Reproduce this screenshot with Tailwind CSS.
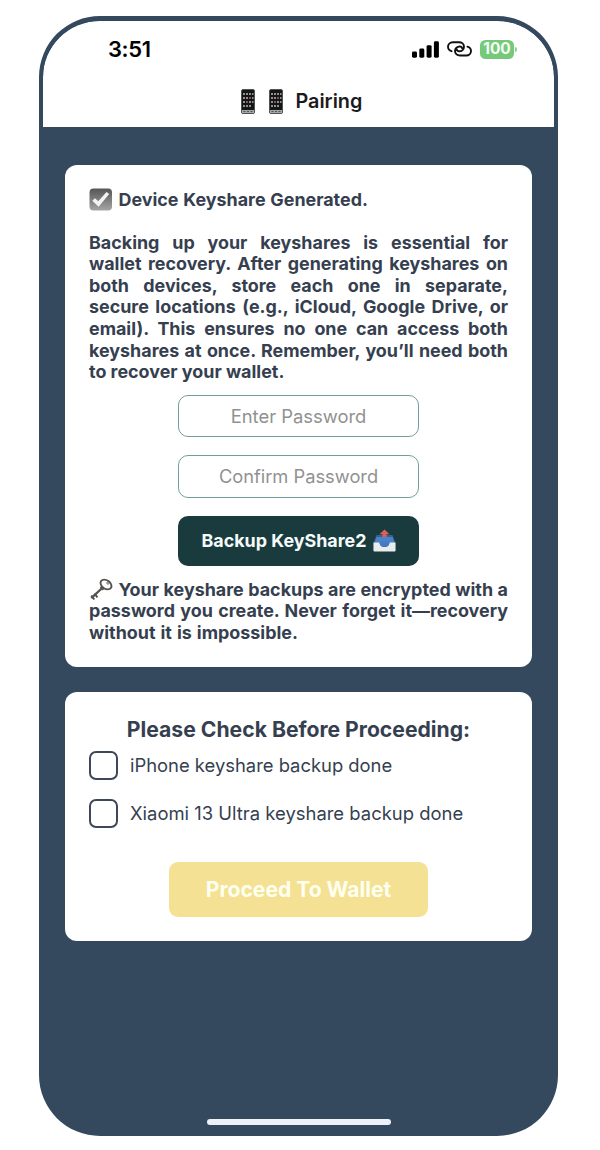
<!DOCTYPE html>
<html lang="en">
<head>
<meta charset="utf-8">
<title>Pairing</title>
<script src="https://cdn.jsdelivr.net/npm/@tailwindcss/browser@4"></script>
</head>
<body class="h-[1150px] overflow-hidden bg-white pt-4 pl-[39px] font-['Inter',sans-serif]">
<svg class="hidden">
  <symbol id="phone" viewBox="0 0 14 25">
    <rect x="0.5" y="0.5" width="13" height="24" rx="1.5" fill="#151515" stroke="#4f5552"/>
    <g fill="#8d9290">
      <path d="M2 4h2v2H2zM5 4h2v2H5zM8 4h2v2H8zM11 4h1.5v2H11zM2 8h2v2H2zM5 8h2v2H5zM8 8h2v2H8zM11 8h1.5v2H11zM2 12h2v2H2zM5 12h2v2H5zM8 12h2v2H8zM11 12h1.5v2H11zM2 16h2v2H2zM5 16h2v2H5zM8 16h2v2H8z"/>
    </g>
    <path d="M8 8h2v2H8zM5 12h2v2H5z" fill="#8a4a60"/>
    <path d="M1 21h12v3H1z" fill="#a3aaa6"/>
    <path d="M2.5 22h2v1h-2zM6 22h2v1H6zM9.500 22h2v1h-2z" fill="#4d5451"/>
  </symbol>
</svg>
<div class="flex h-[1120px] w-[519px] flex-col overflow-hidden rounded-[61px] border-4 border-t-[5px] border-[#34495e] bg-[#34495e]">
  <header class="h-[106px] shrink-0 rounded-t-[56px] bg-white">
    <div class="flex h-[56px] items-center pr-[37px] pl-[65px]">
      <span class="text-[22px] leading-6 font-semibold tracking-[-0.4px] text-black">3:51</span>
      <div class="ml-auto flex items-center">
        <svg class="mr-[8px] h-[17px] w-[27px]" viewBox="0 0 27 17"><g fill="#000"><rect x="0" y="10.500" width="5" height="6.200" rx="1.400"/><rect x="7.300" y="7.600" width="5" height="9.100" rx="1.400"/><rect x="14.600" y="4.200" width="5" height="12.500" rx="1.400"/><rect x="21.900" y="0.300" width="5" height="16.400" rx="1.400"/></g></svg>
        <svg class="mr-[8px] h-[16px] w-[25px]" viewBox="0 0 25 16" fill="none" stroke="#111" stroke-width="1.900" stroke-linecap="round"><path d="M4.600 10.200C2.300 9.500 1 8 1 5.800C1 3.200 3 1.300 5.800 1.300H12C14.800 1.300 17 3 17 5.700C17 8.400 14.800 10.300 12.300 10.300C10.700 10.300 9.800 9.500 9.900 8.500"/><path d="M20.400 5.600C22.700 6.300 24 7.800 24 10C24 12.600 22 14.500 19.200 14.500H13C10.200 14.500 8 12.800 8 10.100C8 7.400 10.200 5.500 12.700 5.500C14.300 5.500 15.200 6.300 15.100 7.300"/></svg>
        <div class="flex h-[19px] w-[34px] items-center justify-center rounded-[5.500px] bg-[#76c87b] text-[15.500px] font-bold tracking-[-0.1px] text-[#f4fff4]">100</div>
        <div class="ml-[1px] h-[5px] w-[2px] rounded-r-full bg-[#8bd08f]"></div>
      </div>
    </div>
    <div class="flex h-[48px] items-center pl-[198px] text-[#1b1b1d]">
      <svg class="mr-[14px] h-[25px] w-[14px]"><use href="#phone"/></svg>
      <svg class="mr-[12.500px] h-[25px] w-[14px]"><use href="#phone"/></svg>
      <h1 class="text-[19.800px] leading-6 font-semibold">Pairing</h1>
    </div>
  </header>
  <main class="flex flex-col gap-[25px] px-[22px] pt-[38px] text-[#363f50]">
    <section class="flex h-[502px] flex-col rounded-xl bg-white px-6 pt-[23px] text-[17.900px] leading-[21.600px] font-bold">
      <div class="flex items-center whitespace-nowrap">
        <svg class="mr-[5.500px] h-[23px] w-[24px]" viewBox="0 0 24 23"><defs><linearGradient id="cb" x1="0" y1="0" x2="0" y2="1"><stop offset="0" stop-color="#555"/><stop offset="1" stop-color="#a5a5a5"/></linearGradient></defs><rect x="0.500" y="0.500" width="22.500" height="22" rx="4" fill="url(#cb)"/><path d="M3.300 12.800L6 10.200L9.300 13.300L17.500 4L20.200 6.100L9.600 18.700Z" fill="#f3f3f3"/></svg>
        <h2 class="[word-spacing:0.5px]">Device Keyshare Generated.</h2>
      </div>
      <div class="mt-[20.600px] whitespace-nowrap">
        <p class="[text-align-last:justify]">Backing up your keyshares is essential for</p>
        <p class="[text-align-last:justify]">wallet recovery. After generating keyshares on</p>
        <p class="[text-align-last:justify]">both devices, store each one in separate,</p>
        <p class="[text-align-last:justify]">secure locations (e.g., iCloud, Google Drive, or</p>
        <p class="[text-align-last:justify]">email). This ensures no one can access both</p>
        <p class="[text-align-last:justify]">keyshares at once. Remember, you’ll need both</p>
        <p>to recover your wallet.</p>
      </div>
      <div class="mt-[12px] flex flex-col items-center gap-[18px]">
        <div class="flex h-[42.500px] w-[241px] items-center justify-center rounded-[10px] border-[1.500px] border-[#71a09c] pt-px text-[18.400px] font-normal text-[#919191]">Enter Password</div>
        <div class="flex h-[42.500px] w-[241px] items-center justify-center rounded-[10px] border-[1.500px] border-[#71a09c] pt-px text-[18.300px] font-normal text-[#919191]">Confirm Password</div>
        <div class="flex h-[50px] w-[241px] items-center justify-center gap-[6px] rounded-[10px] bg-[#1a3b3d] text-[#f5fafa]">
          <span class="text-[17.900px]">Backup KeyShare2</span>
          <svg class="h-[23px] w-[23px]" viewBox="0 0 23 23"><path d="M3.500 6H19.500L22.500 14V22H0.500V14Z" fill="#38618f"/><path d="M3.500 8H19.500L21.500 14H1.500Z" fill="#4b83cb"/><path d="M0.500 13.500H6.500C7 17 8.500 18 11.500 18S16 17 16.500 13.500H22.500V21.500Q22.500 22.500 21.500 22.500H1.500Q0.500 22.500 0.500 21.500Z" fill="#e9ecec"/><path d="M6.500 12.500H16.500C16.500 16 15 17.500 11.500 17.500S6.500 16 6.500 12.500Z" fill="#477ac3"/><path d="M11.500 0.500L16.500 5.300H13.600V8H9.400V5.300H6.500Z" fill="#d96258"/></svg>
        </div>
      </div>
      <div class="mt-[13px] whitespace-nowrap">
        <div class="flex items-center">
          <svg class="-my-1 mr-[5.500px] h-[23px] w-[24px]" viewBox="0 0 24 23" fill="none" stroke="#55524f"><ellipse cx="17" cy="6.500" rx="6" ry="4.200" transform="rotate(35 17 6.500)" stroke-width="1.900"/><circle cx="19" cy="5" r="1.200" stroke-width="0.800"/><path d="M13.200 10L2.300 20.200" stroke-width="2.300"/><path d="M2.300 17.500L5.300 21.500M5.400 15.700L8.500 19.300M11.500 8.800L14.500 11.700" stroke-width="2"/></svg>
          <p class="grow [text-align-last:justify]">Your keyshare backups are encrypted with a</p>
        </div>
        <p class="[text-align-last:justify]">password you create. Never forget it—recovery</p>
        <p class="[word-spacing:0.8px]">without it is impossible.</p>
      </div>
    </section>
    <section class="flex h-[249px] flex-col rounded-xl bg-white px-6 pt-[24px]">
      <h2 class="pt-px text-center text-[21.150px] leading-[26px] font-bold whitespace-nowrap">Please Check Before Proceeding:</h2>
      <label class="mt-[8px] flex h-[29px] items-center gap-[12px] text-[18.400px] whitespace-nowrap"><span class="size-[29px] shrink-0 rounded-[7px] border-[2px] border-[#3e4759]"></span><span class="pt-px">iPhone keyshare backup done</span></label>
      <label class="mt-[19px] flex h-[29px] items-center gap-[12px] text-[18.450px] whitespace-nowrap"><span class="size-[29px] shrink-0 rounded-[7px] border-[2px] border-[#3e4759]"></span><span class="pt-px">Xiaomi 13 Ultra keyshare backup done</span></label>
      <div class="mt-[34px] flex h-[55px] w-[259px] items-center justify-center self-center rounded-[9px] bg-[#f4e193] pt-px text-[21.100px] font-bold text-[#fffff0]">Proceed To Wallet</div>
    </section>
  </main>
  <div class="mt-auto mb-[7px] h-[6px] w-[184px] self-center rounded-full bg-[#edf2fa]"></div>
</div>
</body>
</html>
